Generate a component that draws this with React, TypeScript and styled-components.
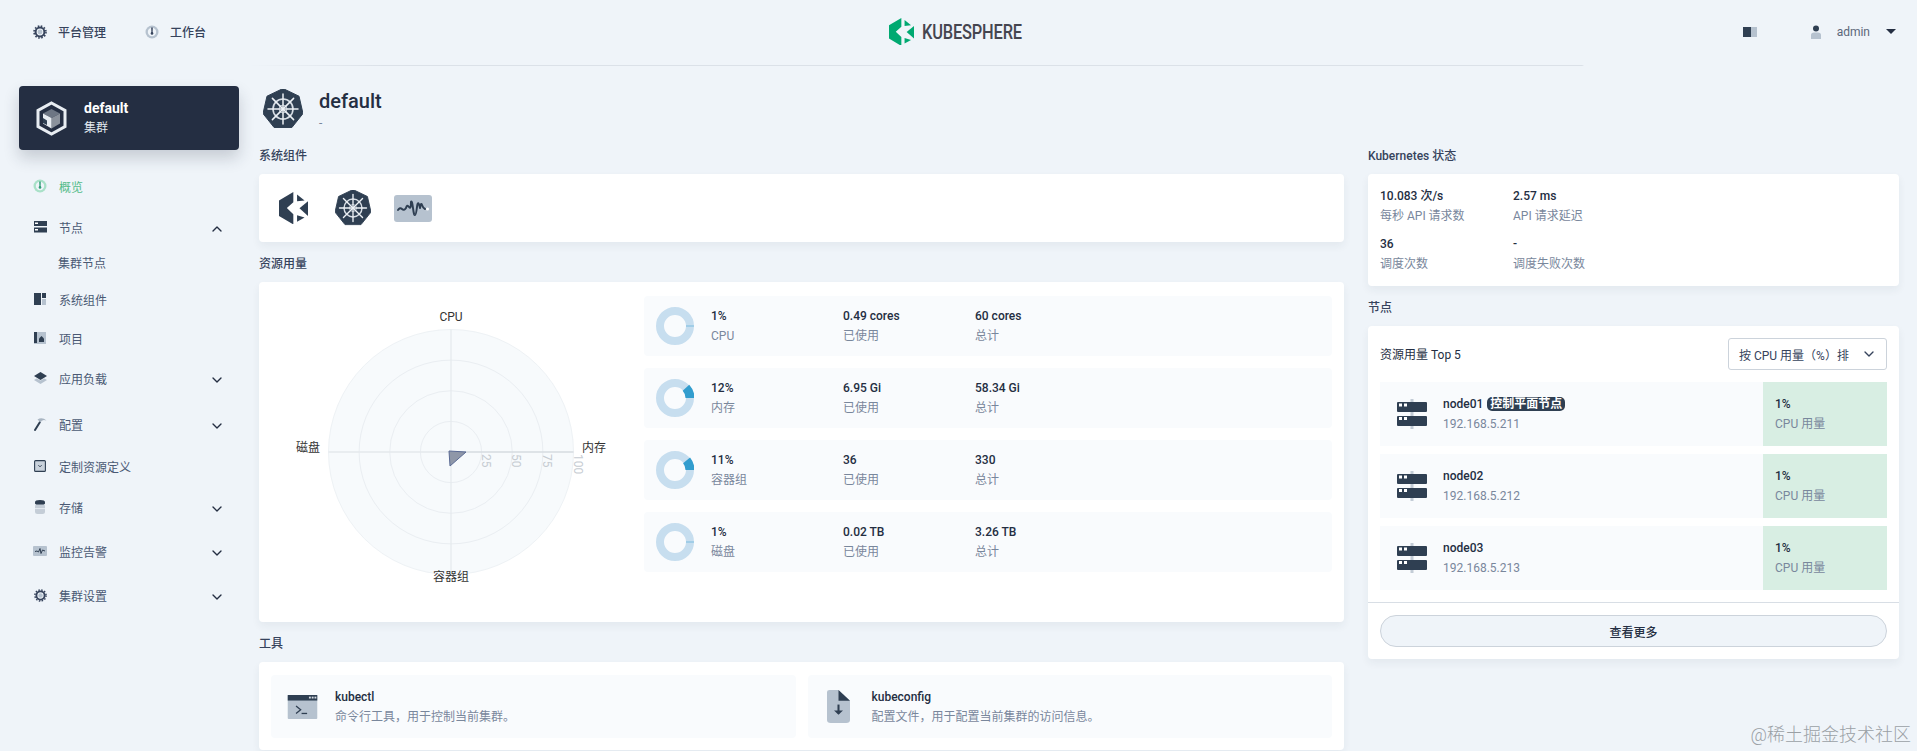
import styled, { createGlobalStyle } from "styled-components"
import { ChevronDown, ChevronUp } from "lucide-react"

const FONT = `Roboto, "Noto Sans CJK SC", "Noto Sans", sans-serif`
const DARK = "#242e42"
const ICON = "#2f3f52"
const MUTED = "#79879c"

const GlobalStyle = createGlobalStyle`
    html, body {
        margin: 0;
        padding: 0;
        background: #eff4f9;
        font-family: ${FONT};
        font-size: 12px;
        color: ${DARK};
    }
    * {
        box-sizing: border-box;
    }
`

const Page = styled.div`
    position: relative;
    width: 1917px;
    height: 751px;
    overflow: hidden;
    background: #eff4f9;
`
const Header = styled.header`
    display: grid;
    grid-template-columns: 1fr auto 1fr;
    align-items: center;
    height: 66px;
    padding: 0 21px 2px 33px;
    border-bottom: 1px solid;
    border-image: linear-gradient(90deg, transparent 13%, #dbe1e8 20%, #dbe1e8 82.5%, transparent 82.6%) 1;
`
const NavLeft = styled.nav`
    display: flex;
    gap: 39px;
`
const NavLink = styled.a`
    display: flex;
    align-items: center;
    gap: 11px;
    font-weight: 500;
    color: #36435c;
`
const Brand = styled.div`
    display: flex;
    align-items: center;
    gap: 8px;
    margin-right: 18px;
`
const BrandName = styled.span`
    font-family: Roboto, sans-serif;
    font-size: 20px;
    font-weight: 500;
    letter-spacing: -0.2px;
    color: #45454f;
    transform: scaleX(0.82);
    transform-origin: left center;
    margin-right: -22px;
`
const NavRight = styled.div`
    display: flex;
    align-items: center;
    justify-content: flex-end;
`
const ThemeToggle = styled.span`
    display: flex;
    margin-right: 53px;
`
const UserName = styled.span`
    margin: 0 16px 0 15px;
    color: #5b6779;
`
const Caret = styled.span`
    width: 0;
    height: 0;
    border-left: 5px solid transparent;
    border-right: 5px solid transparent;
    border-top: 5px solid ${DARK};
`

const Body = styled.div`
    display: grid;
    grid-template-columns: 259px 1085px 555px;
`
const Sidebar = styled.aside`
    padding: 20px 20px 0 19px;
`
const ClusterCard = styled.div`
    display: flex;
    align-items: center;
    gap: 17px;
    height: 64px;
    padding-left: 17px;
    margin-bottom: 26px;
    background: ${DARK};
    border-radius: 4px;
    box-shadow: 0 8px 16px 0 rgba(36, 46, 66, 0.2);
    color: #fff;
`
const ClusterName = styled.div`
    font-size: 14px;
    font-weight: 700;
    line-height: 20px;
`
const ClusterKind = styled.div`
    line-height: 20px;
    color: #e3e9ef;
`
const SideItem = styled.div<{ $top: number; $active?: boolean }>`
    display: flex;
    align-items: center;
    height: 20px;
    margin-top: ${(p) => p.$top}px;
    padding: 0 14px;
    color: ${(p) => (p.$active ? "#55bc8a" : "#4a5974")};
`
const SideIcon = styled.span`
    display: flex;
    justify-content: center;
    width: 14px;
    margin-right: 12px;
`
const SideLabel = styled.span<{ $sub?: boolean }>`
    flex: 1;
    margin-left: ${(p) => (p.$sub ? "25px" : "0")};
`
const SideChevron = styled.span`
    display: flex;
    margin-top: 3px;
`

const Column = styled.main`
    padding-top: 0;
`
const RightColumn = styled.section`
    padding: 80px 0 0 24px;
`
const PageTitle = styled.div`
    display: flex;
    align-items: center;
    gap: 16px;
    height: 80px;
    padding: 6px 0 0 4px;
`
const TitleText = styled.h1`
    margin: 0 0 1px;
    font-size: 20px;
    font-weight: 500;
    line-height: 26px;
`
const TitleDesc = styled.div`
    line-height: 16px;
    color: ${MUTED};
`
const SectionTitle = styled.h3`
    margin: 0 0 8px;
    height: 20px;
    font-size: 12px;
    font-weight: 500;
    line-height: 20px;
    color: #36435c;
`
const Card = styled.div<{ $h: number }>`
    height: ${(p) => p.$h}px;
    margin-bottom: 12px;
    background: #fff;
    border-radius: 4px;
    box-shadow: 0 4px 8px 0 rgba(36, 46, 66, 0.06);
`
const ComponentRow = styled.div`
    display: flex;
    align-items: center;
    gap: 20px;
    height: 100%;
    padding-left: 14px;
`
const ComponentSlot = styled.span`
    display: flex;
    align-items: center;
    justify-content: center;
    width: 40px;
    height: 40px;
`

const UsageLayout = styled.div`
    display: flex;
    height: 100%;
    padding: 14px 12px 0 0;
`
const RadarBox = styled.div`
    flex: none;
    width: 385px;
    display: flex;
    justify-content: center;
`
const UsageList = styled.div`
    flex: 1;
    display: flex;
    flex-direction: column;
    gap: 12px;
`
const UsageRow = styled.div`
    display: flex;
    align-items: center;
    height: 60px;
    padding-left: 12px;
    background: #f9fbfd;
    border-radius: 4px;
`
const DonutBox = styled.span`
    display: flex;
    width: 55px;
`
const StatBox = styled.div<{ $w: number }>`
    width: ${(p) => p.$w}px;
    flex: none;
`
const StatValue = styled.div`
    font-weight: 500;
    line-height: 20px;
    color: ${DARK};
    white-space: nowrap;
`
const StatLabel = styled.div`
    line-height: 20px;
    color: ${MUTED};
    white-space: nowrap;
`

const ToolGrid = styled.div`
    display: grid;
    grid-template-columns: 1fr 1fr;
    column-gap: 12px;
    height: 100%;
    padding: 13px 12px 12px;
`
const ToolItem = styled.div`
    display: flex;
    align-items: center;
    gap: 17px;
    padding-left: 15px;
    background: #f9fbfd;
    border-radius: 4px;
`
const ToolIconBox = styled.span`
    display: flex;
    justify-content: center;
    width: 32px;
`

const K8sGrid = styled.div`
    display: grid;
    grid-template-columns: 133px 1fr;
    grid-auto-rows: 48px;
    padding: 12px;
`
const NodesHead = styled.div`
    display: flex;
    align-items: center;
    justify-content: space-between;
    padding: 12px;
`
const NodesTitle = styled.span`
    margin-top: -2px;
`
const SortSelect = styled.div`
    display: flex;
    align-items: center;
    justify-content: space-between;
    width: 159px;
    height: 32px;
    padding: 0 9px 0 10px;
    background: #fff;
    border: 1px solid #ccd3db;
    border-radius: 3px;
    color: #36435c;
    white-space: nowrap;
`
const NodeList = styled.div`
    display: flex;
    flex-direction: column;
    gap: 8px;
    padding: 0 12px;
`
const NodeRow = styled.div`
    display: flex;
    height: 64px;
    background: #f9fbfd;
`
const NodeInfo = styled.div`
    flex: 1;
    display: flex;
    align-items: center;
    gap: 16px;
    padding-left: 17px;
`
const NodeName = styled.div`
    display: flex;
    align-items: center;
    gap: 4px;
    font-weight: 500;
    line-height: 20px;
`
const MasterTag = styled.span`
    padding: 0 3px;
    height: 14px;
    font-size: 12px;
    font-weight: 700;
    line-height: 14px;
    color: #fff;
    background: ${ICON};
    border-radius: 5px;
`
const NodeUsage = styled.div`
    display: flex;
    flex-direction: column;
    justify-content: center;
    width: 124px;
    padding-left: 12px;
    background: #d8eee3;
`
const NodesFoot = styled.div`
    margin-top: 12px;
    padding: 12px;
    border-top: 1px solid #d8dee5;
`
const MoreButton = styled.button`
    display: block;
    width: 100%;
    height: 32px;
    background: #eff4f9;
    border: 1px solid #ccd3db;
    border-radius: 16px;
    font-family: ${FONT};
    font-size: 12px;
    font-weight: 500;
    color: ${DARK};
`
const Watermark = styled.div`
    position: absolute;
    right: 6px;
    bottom: 6px;
    font-size: 18px;
    font-weight: 300;
    line-height: 20px;
    color: #9aa0a5;
`

function Logo({ size, color }: { size: number; color: string }) {
    return (
        <svg width={size} height={size * 95 / 85} viewBox="0 0 85 95" fill={color}>
            <polygon points="0,25 42,0 42,30 23,47 42,65 42,95 0,70" />
            <polygon points="53,7 75,25 53,27" />
            <polygon points="85,27 85,70 60,48" />
            <polygon points="53,68 75,75 53,87" />
        </svg>
    )
}

function Wheel({ size }: { size: number }) {
    const sides = [0, 1, 2, 3, 4, 5, 6].map((i) => (i * 2 * Math.PI) / 7 - Math.PI / 2)
    const hept = sides.map((a) => `${20 + 20.5 * Math.cos(a)},${20 + 20.5 * Math.sin(a)}`).join(" ")
    const spokes = [0, 45, 90, 135]
    return (
        <svg width={size} height={size} viewBox="0 0 40 40">
            <polygon points={hept} fill={ICON} stroke={ICON} strokeWidth="1" strokeLinejoin="round" />
            <circle cx="20" cy="20" r="10" fill="none" stroke="#d8dee5" strokeWidth="1.6" />
            <circle cx="20" cy="20" r="4" fill="none" stroke="#aeb8c3" strokeWidth="1" />
            {spokes.map((deg) => (
                <line
                    key={deg}
                    x1="5"
                    y1="20"
                    x2="35"
                    y2="20"
                    stroke="#eef2f6"
                    strokeWidth="1.5"
                    strokeLinecap="round"
                    transform={`rotate(${deg} 20 20)`}
                />
            ))}
        </svg>
    )
}

function Pulse() {
    return (
        <svg width="38" height="27" viewBox="0 0 38 27">
            <rect width="38" height="27" rx="3" fill="#b6c2cf" />
            <path
                d="M4 15 Q6 12 8 14 T12 13 Q13 9 15 12 T17 7 Q18 5 19 13 T21 20 Q22 20 23 12 T26 13 Q27 7 28 10 T31 14"
                fill="none"
                stroke={ICON}
                strokeWidth="2"
                strokeLinejoin="round"
                strokeLinecap="round"
            />
            <circle cx="33.5" cy="14" r="1.5" fill="#fff" />
        </svg>
    )
}

function Gear({ size }: { size: number }) {
    return (
        <svg width={size} height={size} viewBox="0 0 14 14">
            <circle cx="7" cy="7" r="4.4" fill="none" stroke="#36435c" strokeWidth="2" />
            <circle cx="7" cy="7" r="2.4" fill="#b6c2cf" />
            <circle cx="7" cy="7" r="6" fill="none" stroke="#36435c" strokeWidth="1.6" strokeDasharray="1.6 1.55" />
        </svg>
    )
}

function Dial({ color, dot }: { color: string; dot: string }) {
    return (
        <svg width="14" height="14" viewBox="0 0 14 14">
            <circle cx="7" cy="7" r="6.5" fill={color} />
            <circle cx="7" cy="7" r="4.2" fill="#eff4f9" />
            <path d="M6.2 2.5 H7.8 L7.6 8 H6.4 Z" fill={dot} />
            <circle cx="7" cy="8.4" r="1.3" fill={dot} />
        </svg>
    )
}

function ServerSmall() {
    return (
        <svg width="13" height="12" viewBox="0 0 13 12">
            <rect width="13" height="5" fill={ICON} />
            <rect y="6.5" width="13" height="5" fill={ICON} />
            <rect x="1" y="1.5" width="3" height="1.5" fill="#fff" />
            <rect x="1" y="8" width="3" height="1.5" fill="#fff" />
        </svg>
    )
}

function Panels() {
    return (
        <svg width="12" height="12" viewBox="0 0 12 12">
            <rect width="7" height="12" fill={ICON} />
            <rect x="8" width="4" height="5" fill={ICON} />
            <rect x="8" y="6" width="4" height="6" fill="#b6c2cf" />
        </svg>
    )
}

function Project() {
    return (
        <svg width="12" height="12" viewBox="0 0 12 12">
            <rect width="12" height="12" fill="#b6c2cf" />
            <rect width="3" height="11" fill={ICON} />
            <path d="M5 10 V6.5 L7.5 4 L10 6.5 V10 Z" fill={ICON} />
        </svg>
    )
}

function Layers() {
    return (
        <svg width="13" height="12" viewBox="0 0 13 12">
            <polygon points="0,8 2.6,6.4 6.5,8.6 10.4,6.4 13,8 6.5,12" fill="#b6c2cf" />
            <polygon points="0,4 6.5,0 13,4 6.5,8" fill={ICON} />
        </svg>
    )
}

function Hammer() {
    return (
        <svg width="13" height="14" viewBox="0 0 13 14">
            <path d="M1 13 L6 5" stroke={ICON} strokeWidth="2" strokeLinecap="round" />
            <path d="M3.5 2.5 Q8 -0.5 12.5 3.5 Q8 1.6 6.5 5.5 Z" fill="#a9b5c2" />
        </svg>
    )
}

function CrdBox() {
    return (
        <svg width="12" height="12" viewBox="0 0 12 12">
            <rect x="0.6" y="0.6" width="10.8" height="10.8" rx="1" fill="#c9d2dc" stroke={ICON} strokeWidth="1.1" />
            <path d="M4.4 5.2 L6 6.8 L7.6 5.2" fill="none" stroke={ICON} strokeWidth="1" />
        </svg>
    )
}

function Database() {
    return (
        <svg width="10" height="14" viewBox="0 0 10 14">
            <rect y="4" width="10" height="10" rx="2.5" fill="#c4cdd7" />
            <line x1="0" y1="8.6" x2="10" y2="8.6" stroke="#eff4f9" strokeWidth="0.8" />
            <path d="M0 2.2 Q0 0 5 0 Q10 0 10 2.2 V3.4 Q10 4.6 5 4.6 Q0 4.6 0 3.4 Z" fill={ICON} />
        </svg>
    )
}

function PulseSmall() {
    return (
        <svg width="14" height="10" viewBox="0 0 14 10">
            <rect width="14" height="10" rx="1" fill="#b6c2cf" />
            <path d="M2 5.5 L4 5 L5.5 6 L7 2.5 L8 7.5 L9.5 4 L12 5" fill="none" stroke={ICON} strokeWidth="1" />
        </svg>
    )
}

function Server() {
    return (
        <svg width="30" height="30" viewBox="0 0 30 30">
            <rect x="13.5" width="3" height="30" fill="#c3ccd6" />
            <rect y="3" width="30" height="10" rx="1" fill={ICON} />
            <rect y="17" width="30" height="10" rx="1" fill={ICON} />
            <rect x="2" y="4.5" width="3" height="3" fill="#fff" />
            <rect x="7" y="4.5" width="3" height="3" fill="#fff" />
            <rect x="2" y="18" width="3" height="3" fill="#fff" />
            <rect x="7" y="18" width="3" height="3" fill="#fff" />
        </svg>
    )
}

function ClusterIcon() {
    return (
        <svg width="31" height="35" viewBox="0 0 31 35">
            <polygon points="15.5,2 29,9.5 29,25.5 15.5,33 2,25.5 2,9.5" fill="none" stroke="#e8edf2" strokeWidth="3" />
            <polygon points="15.5,8 24,12.5 15.5,17 7,12.5" fill="#6d7684" />
            <polygon points="24,12.5 24,22.5 15.5,27.5 15.5,17" fill="#8b929c" />
            <polygon points="7,12.5 15.5,17 15.5,27.5 7,22.5" fill="#e8edf2" />
            <polygon points="7,17 11,19.5 11,24 7,22" fill="#2f3f52" />
        </svg>
    )
}

function Terminal() {
    return (
        <svg width="31" height="24" viewBox="0 0 32 26">
            <rect width="32" height="26" rx="1" fill="#b6c2cf" />
            <rect width="32" height="6" fill={ICON} />
            <rect x="23" y="1.8" width="2" height="2" fill="#d8dee5" />
            <rect x="26" y="1.8" width="2" height="2" fill="#d8dee5" />
            <rect x="29" y="1.8" width="2" height="2" fill="#d8dee5" />
            <path d="M9 12 L14 16 L9 20" fill="none" stroke={ICON} strokeWidth="1.4" />
            <line x1="15" y1="20" x2="21" y2="20" stroke={ICON} strokeWidth="1.4" />
        </svg>
    )
}

function FileDown() {
    return (
        <svg width="23" height="33" viewBox="0 0 18 34" preserveAspectRatio="none">
            <path d="M2 0 H9 L18 11 V31 Q18 34 15 34 H3 Q0 34 0 31 V2 Q0 0 2 0 Z" fill="#b6c2cf" />
            <path d="M9 0 L18 11 H9 Z" fill={ICON} />
            <path d="M9 15 V24" stroke={ICON} strokeWidth="1.6" />
            <path d="M5.5 21 L9 25.5 L12.5 21 Z" fill={ICON} />
        </svg>
    )
}

function Donut({ percent }: { percent: number }) {
    const len = 2 * Math.PI * 15
    return (
        <svg width="38" height="38" viewBox="0 0 38 38">
            <circle cx="19" cy="19" r="15" fill="none" stroke="#c7deef" strokeWidth="8" />
            <circle
                cx="19"
                cy="19"
                r="15"
                fill="none"
                stroke="#329dce"
                strokeWidth={percent < 2 ? 8 : 9}
                strokeDasharray={`${percent < 2 ? 0.5 : (len * percent) / 100} ${len}`}
                transform={`rotate(${percent < 2 ? -1 : -(percent * 3.6)} 19 19)`}
            />
        </svg>
    )
}

function Radar() {
    const c = 192
    const r = 122.5
    return (
        <svg width="385" height="330" viewBox="0 0 385 330" fontFamily={FONT} fontSize="12">
            <g transform="translate(0 -27)">
                <circle cx={c} cy="183" r={r} fill="#f7fafc" stroke="#eef2f5" />
                {[0.25, 0.5, 0.75].map((f) => (
                    <circle key={f} cx={c} cy="183" r={r * f} fill="none" stroke="#eaeef2" />
                ))}
                <line x1={c} y1={183 - r} x2={c} y2={183 + r} stroke="#e4e9ed" strokeWidth="1.2" />
                <line x1={c - r} y1="183" x2={c} y2="183" stroke="#e4e8ec" strokeWidth="1.4" />
                <line x1={c} y1="183" x2={c + r} y2="183" stroke="#d6dbe0" strokeWidth="1.4" />
                <polygon points={`${c - 2},182 ${c + 15},183 ${c - 1},197`} fill="#8f97a8" stroke="#5a6a94" />
                <g fill="#c6ccd2" fontSize="12">
                    {[25, 50, 75, 100].map((v, i) => (
                        <text key={v} transform={`translate(${c + r * (i + 1) * 0.25} 185) rotate(90)`}>
                            {v}
                        </text>
                    ))}
                </g>
                <g fill="#333" textAnchor="middle">
                    <text x={c} y="52">CPU</text>
                    <text x={c + 143} y="183">内存</text>
                    <text x={c} y="312">容器组</text>
                    <text x={c - 143} y="183">磁盘</text>
                </g>
            </g>
        </svg>
    )
}

const sideItems = [
    { top: 0, icon: <Dial color="#a9e1c8" dot="#2f9e77" />, label: "概览", active: true },
    { top: 21, icon: <ServerSmall />, label: "节点", chevron: "up" },
    { top: 15, label: "集群节点", sub: true },
    { top: 17, icon: <Panels />, label: "系统组件" },
    { top: 19, icon: <Project />, label: "项目" },
    { top: 20, icon: <Layers />, label: "应用负载", chevron: "down" },
    { top: 26, icon: <Hammer />, label: "配置", chevron: "down" },
    { top: 22, icon: <CrdBox />, label: "定制资源定义" },
    { top: 21, icon: <Database />, label: "存储", chevron: "down" },
    { top: 24, icon: <PulseSmall />, label: "监控告警", chevron: "down" },
    { top: 24, icon: <Gear size={13} />, label: "集群设置", chevron: "down" },
]

const usage = [
    { percent: 1, name: "CPU", used: "0.49 cores", total: "60 cores" },
    { percent: 12, name: "内存", used: "6.95 Gi", total: "58.34 Gi" },
    { percent: 11, name: "容器组", used: "36", total: "330" },
    { percent: 1, name: "磁盘", used: "0.02 TB", total: "3.26 TB" },
]

const k8sStats = [
    { value: "10.083 次/s", label: "每秒 API 请求数" },
    { value: "2.57 ms", label: "API 请求延迟" },
    { value: "36", label: "调度次数" },
    { value: "-", label: "调度失败次数" },
]

const nodes = [
    { name: "node01", ip: "192.168.5.211", master: true },
    { name: "node02", ip: "192.168.5.212" },
    { name: "node03", ip: "192.168.5.213" },
]

export default function App() {
    return (
        <Page>
            <GlobalStyle />
            <Header>
                <NavLeft>
                    <NavLink><Gear size={14} />平台管理</NavLink>
                    <NavLink><Dial color="#b6c2cf" dot="#36435c" />工作台</NavLink>
                </NavLeft>
                <Brand>
                    <Logo size={25} color="#00a971" />
                    <BrandName>KUBESPHERE</BrandName>
                </Brand>
                <NavRight>
                    <ThemeToggle>
                        <svg width="14" height="10" viewBox="0 0 14 10">
                            <rect width="8" height="10" fill={ICON} />
                            <rect x="8" width="6" height="10" fill="#b6c2cf" />
                        </svg>
                    </ThemeToggle>
                    <svg width="12" height="14" viewBox="0 0 12 14">
                        <circle cx="6" cy="3.5" r="3" fill={ICON} />
                        <path d="M1 14 V10 Q1 7.5 4 7.5 H8 Q11 7.5 11 10 V14 Z" fill="#b6c2cf" />
                    </svg>
                    <UserName>admin</UserName>
                    <Caret />
                </NavRight>
            </Header>
            <Body>
                <Sidebar>
                    <ClusterCard>
                        <ClusterIcon />
                        <div>
                            <ClusterName>default</ClusterName>
                            <ClusterKind>集群</ClusterKind>
                        </div>
                    </ClusterCard>
                    {sideItems.map((item) => (
                        <SideItem key={item.label} $top={item.top} $active={item.active}>
                            {item.icon && <SideIcon>{item.icon}</SideIcon>}
                            <SideLabel $sub={item.sub}>{item.label}</SideLabel>
                            {item.chevron === "up" && <SideChevron><ChevronUp size={16} color={DARK} /></SideChevron>}
                            {item.chevron === "down" && <SideChevron><ChevronDown size={16} color={DARK} /></SideChevron>}
                        </SideItem>
                    ))}
                </Sidebar>
                <Column>
                    <PageTitle>
                        <Wheel size={40} />
                        <div>
                            <TitleText>default</TitleText>
                            <TitleDesc>-</TitleDesc>
                        </div>
                    </PageTitle>
                    <SectionTitle>系统组件</SectionTitle>
                    <Card $h={68}>
                        <ComponentRow>
                            <ComponentSlot><Logo size={29} color={ICON} /></ComponentSlot>
                            <ComponentSlot><Wheel size={36} /></ComponentSlot>
                            <ComponentSlot><Pulse /></ComponentSlot>
                        </ComponentRow>
                    </Card>
                    <SectionTitle>资源用量</SectionTitle>
                    <Card $h={340}>
                        <UsageLayout>
                            <RadarBox><Radar /></RadarBox>
                            <UsageList>
                                {usage.map((u) => (
                                    <UsageRow key={u.name}>
                                        <DonutBox><Donut percent={u.percent} /></DonutBox>
                                        <StatBox $w={132}>
                                            <StatValue>{u.percent}%</StatValue>
                                            <StatLabel>{u.name}</StatLabel>
                                        </StatBox>
                                        <StatBox $w={132}>
                                            <StatValue>{u.used}</StatValue>
                                            <StatLabel>已使用</StatLabel>
                                        </StatBox>
                                        <StatBox $w={132}>
                                            <StatValue>{u.total}</StatValue>
                                            <StatLabel>总计</StatLabel>
                                        </StatBox>
                                    </UsageRow>
                                ))}
                            </UsageList>
                        </UsageLayout>
                    </Card>
                    <SectionTitle>工具</SectionTitle>
                    <Card $h={88}>
                        <ToolGrid>
                            <ToolItem>
                                <ToolIconBox><Terminal /></ToolIconBox>
                                <StatBox $w={300}>
                                    <StatValue>kubectl</StatValue>
                                    <StatLabel>命令行工具，用于控制当前集群。</StatLabel>
                                </StatBox>
                            </ToolItem>
                            <ToolItem>
                                <ToolIconBox><FileDown /></ToolIconBox>
                                <StatBox $w={400}>
                                    <StatValue>kubeconfig</StatValue>
                                    <StatLabel>配置文件，用于配置当前集群的访问信息。</StatLabel>
                                </StatBox>
                            </ToolItem>
                        </ToolGrid>
                    </Card>
                </Column>
                <RightColumn>
                    <SectionTitle>Kubernetes 状态</SectionTitle>
                    <Card $h={112}>
                        <K8sGrid>
                            {k8sStats.map((s) => (
                                <div key={s.label}>
                                    <StatValue>{s.value}</StatValue>
                                    <StatLabel>{s.label}</StatLabel>
                                </div>
                            ))}
                        </K8sGrid>
                    </Card>
                    <SectionTitle>节点</SectionTitle>
                    <Card $h={333}>
                        <NodesHead>
                            <NodesTitle>资源用量 Top 5</NodesTitle>
                            <SortSelect>
                                按 CPU 用量（%）排
                                <ChevronDown size={16} />
                            </SortSelect>
                        </NodesHead>
                        <NodeList>
                            {nodes.map((n) => (
                                <NodeRow key={n.name}>
                                    <NodeInfo>
                                        <Server />
                                        <div>
                                            <NodeName>
                                                {n.name}
                                                {n.master && <MasterTag>控制平面节点</MasterTag>}
                                            </NodeName>
                                            <StatLabel>{n.ip}</StatLabel>
                                        </div>
                                    </NodeInfo>
                                    <NodeUsage>
                                        <StatValue>1%</StatValue>
                                        <StatLabel>CPU 用量</StatLabel>
                                    </NodeUsage>
                                </NodeRow>
                            ))}
                        </NodeList>
                        <NodesFoot>
                            <MoreButton>查看更多</MoreButton>
                        </NodesFoot>
                    </Card>
                </RightColumn>
            </Body>
            <Watermark>@稀土掘金技术社区</Watermark>
        </Page>
    )
}
